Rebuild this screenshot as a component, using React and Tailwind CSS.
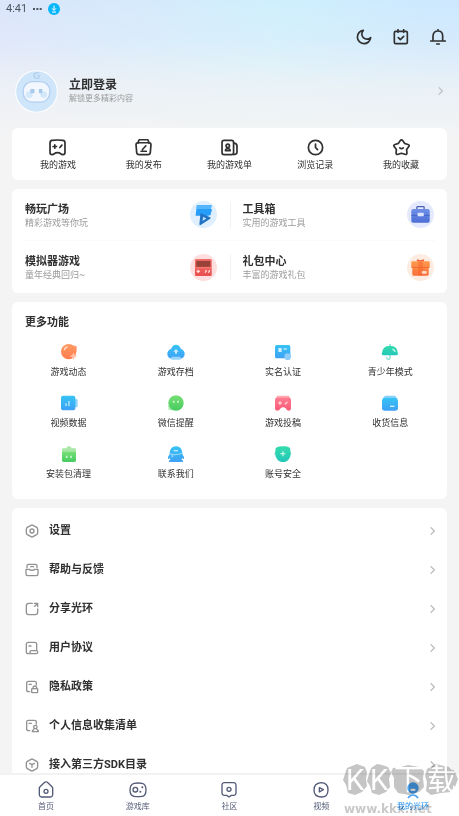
import React from 'react';

const Line = ({ children, className, size = 48, width = 4 }) => (
  <svg
    viewBox={`0 0 ${size} ${size}`}
    className={className}
    fill="none"
    stroke="currentColor"
    strokeWidth={width}
    strokeLinecap="round"
    strokeLinejoin="round"
    aria-hidden="true"
  >
    {children}
  </svg>
);

const Chevron = ({ className }) => (
  <svg viewBox="0 0 15 24" className={`w-[5px] h-2 shrink-0 ${className}`} fill="none" stroke="currentColor" strokeWidth="4" aria-hidden="true">
    <path d="M2 1l11 11L2 23" />
  </svg>
);

// Shared fills for the coloured icons
const Gradients = () => (
  <svg className="absolute size-0" aria-hidden="true">
    <defs>
      {[
        ['blue', '#35c4f4', '#3fa0f5'],
        ['orange', '#ff9a63', '#ff7c4c'],
        ['green', '#78df76', '#46cb60'],
        ['teal', '#35dcac', '#22c7b8'],
        ['pink', '#ff7c90', '#fb5a78'],
        ['indigo', '#6f8fe8', '#4c6ed6'],
        ['gift', '#ff9a4d', '#fb6f3a'],
        ['red', '#f3706a', '#e9504f'],
      ].map(([id, from, to]) => (
        <linearGradient key={id} id={id} x1="0" y1="0" x2="0" y2="1">
          <stop offset="0" stopColor={from} />
          <stop offset="1" stopColor={to} />
        </linearGradient>
      ))}
    </defs>
  </svg>
);

const shortcuts = [
  {
    label: '我的游戏',
    icon: (
      <>
        <path d="M9 4Q25 2 41 4Q47 5 47 11V40Q47 46 41 46Q37 46 34 43Q31 40 25 40T16 43Q13 46 9 46Q3 46 3 40V11Q3 5 9 4Z" />
        <path d="M17 17v10M12 22h10M32 25l6-7" />
      </>
    ),
  },
  {
    label: '我的发布',
    icon: (
      <>
        <path d="M9 12L11 4Q12 2 15 2H35Q38 2 39 4L41 12" />
        <path d="M8 11H42Q47 11 47 17L45 40Q44 46 38 46H12Q6 46 5 40L3 17Q3 11 8 11Z" />
        <path d="M22 31L32 20M18 36H33" />
      </>
    ),
  },
  {
    label: '我的游戏单',
    icon: (
      <>
        <rect x="3" y="4" width="34" height="42" rx="6" />
        <path d="M39 12Q47 14 47 20V39Q47 45 38 46" />
        <circle cx="20" cy="20" r="5" />
        <path d="M13 34Q14 28 20 28T27 34Z" />
      </>
    ),
  },
  {
    label: '浏览记录',
    icon: (
      <>
        <circle cx="25" cy="25" r="21" />
        <path d="M25 15V25L31 31" />
      </>
    ),
  },
  {
    label: '我的收藏',
    icon: (
      <>
        <path d="M21 5Q25 0 29 5L34 13L44 16Q50 18 46 23L40 31L41 41Q41 47 35 45L25 42L15 45Q9 47 9 41L10 31L4 23Q0 18 6 16L16 13Z" />
        <path d="M20 26Q25 31 30 26" />
      </>
    ),
  },
];

const entries = [
  {
    title: '畅玩广场',
    desc: '精彩游戏等你玩',
    tint: 'bg-[#e0effe]',
    icon: (
      <>
        <path d="M21 13H66L63 24L67 26L62 43L38 48L30 45H17Z" fill="#269df8" />
        <path d="M21 13H66L63 24H19Z" fill="#55b6ff" />
        <path d="M34 40L60 52L31 71Z" fill="#2373c4" stroke="#2373c4" strokeWidth="5" strokeLinejoin="round" />
        <path d="M40 48L50 53L38 61Z" fill="#b9dfff" />
      </>
    ),
  },
  {
    title: '工具箱',
    desc: '实用的游戏工具',
    tint: 'bg-[#e4e9fd]',
    icon: (
      <>
        <path d="M30 25V19Q30 17 33 17H49Q52 17 52 19V25" fill="none" stroke="#4a63ae" strokeWidth="4" />
        <path d="M19 24H63Q69 24 69 30V60Q69 66 63 66H19Q13 66 13 60V30Q13 24 19 24Z" fill="url(#indigo)" />
        <path d="M13 44H69" stroke="#3f5cc0" strokeWidth="2" />
        <rect x="32" y="36" width="19" height="10" rx="2" fill="#d9e3fc" />
      </>
    ),
  },
  {
    title: '模拟器游戏',
    desc: '童年经典回归~',
    tint: 'bg-[#fddfdf]',
    icon: (
      <>
        <rect x="15" y="15" width="51" height="52" rx="4" fill="url(#red)" />
        <rect x="19" y="21" width="43" height="18" fill="#984239" />
        <path d="M15 42H66" stroke="#ff958c" strokeWidth="2" />
        <path d="M25 48V58M20 53H30M46 57L50 49M56 57L60 49" stroke="#ffe0dc" strokeWidth="4" />
      </>
    ),
  },
  {
    title: '礼包中心',
    desc: '丰富的游戏礼包',
    tint: 'bg-[#fdece2]',
    icon: (
      <>
        <path d="M30 23V16L40 19L52 16V23Z" fill="#f5633a" />
        <path d="M16 22H66Q69 22 69 25V40H66V61Q66 66 61 66H20Q16 66 16 61V40H13V25Q13 22 16 22Z" fill="url(#gift)" />
        <path d="M34 22H48V66H34Z" fill="#f4662f" opacity="0.55" />
        <path d="M13 41H69" stroke="#ee632f" strokeWidth="2" />
        <rect x="45" y="52" width="15" height="8" rx="3" fill="#ffd9c4" />
      </>
    ),
  },
];

const features = [
  {
    label: '游戏动态',
    icon: (
      <>
        <path d="M40 7L50 10V24L44 34Z" fill="#ff9e78" />
        <circle cx="26" cy="26" r="23" fill="url(#orange)" />
        <path d="M13 20Q15 14 21 12" stroke="#ffe2d4" strokeWidth="4" fill="none" strokeLinecap="round" />
        <path d="M41 28L44 36L52 39L44 43L41 51L37 43L29 39L37 36Z" fill="#ffc2a8" />
      </>
    ),
  },
  {
    label: '游戏存档',
    icon: (
      <>
        <path d="M12 18Q17 5 27 5T42 18Q53 22 53 33Q52 46 40 47H14Q2 46 1 33Q1 22 12 18Z" fill="url(#blue)" />
        <path d="M27 18L35 26H30V32H24V26H19Z" fill="#c9ecff" />
        <rect x="13" y="41" width="28" height="9" rx="3" fill="#9ad6fb" />
      </>
    ),
  },
  {
    label: '实名认证',
    icon: (
      <>
        <rect x="3" y="6" width="46" height="40" rx="5" fill="url(#blue)" />
        <rect x="13" y="15" width="10" height="12" rx="2" fill="#d3f0ff" />
        <path d="M28 18H39" stroke="#bde7ff" strokeWidth="4" />
        <circle cx="41" cy="41" r="10" fill="#8fcdf9" />
      </>
    ),
  },
  {
    label: '青少年模式',
    icon: (
      <>
        <path d="M27 3V9M27 36V45Q26 50 21 49Q17 48 17 43" stroke="#86dfd2" strokeWidth="4" fill="none" />
        <path d="M2 33Q4 8 27 8T51 33Q50 37 45 37H8Q3 37 2 33Z" fill="url(#teal)" />
        <path d="M36 19L42 25" stroke="#d0f7ee" strokeWidth="4" strokeLinecap="round" />
      </>
    ),
  },
  {
    label: '视频数据',
    icon: (
      <>
        <path d="M44 15H49Q53 15 53 19V36Q53 40 49 40H44Z" fill="#8fd3fa" />
        <rect x="3" y="5" width="43" height="44" rx="6" fill="url(#blue)" />
        <path d="M18 28V36M27 21V36" stroke="#bfe9ff" strokeWidth="4" />
      </>
    ),
  },
  {
    label: '微信提醒',
    icon: (
      <>
        <path d="M3 33L5 49H18Z" fill="#b5ecb2" />
        <circle cx="27" cy="27" r="23" fill="url(#green)" />
        <path d="M20 20V26M33 20V26" stroke="#d3f6cf" strokeWidth="5" />
      </>
    ),
  },
  {
    label: '游戏投稿',
    icon: (
      <>
        <path d="M10 5H44L50 14H4Z" fill="#ffa6ae" />
        <path d="M8 11H46Q51 12 51 18V44Q50 50 44 50Q38 50 35 43Q27 37 20 43Q17 50 10 50Q4 50 3 44V18Q3 12 8 11Z" fill="url(#pink)" />
        <path d="M18 22V32M13 27H23M33 31L40 24" stroke="#ffd5da" strokeWidth="4" />
      </>
    ),
  },
  {
    label: '收货信息',
    icon: (
      <>
        <path d="M12 5H42L50 15H4Z" fill="#86cffa" />
        <path d="M7 12H46L51 19V43Q51 50 44 50H10Q3 50 3 43V19Z" fill="url(#blue)" />
        <path d="M27 37H40" stroke="#d3f0ff" strokeWidth="4" />
      </>
    ),
  },
  {
    label: '安装包清理',
    icon: (
      <>
        <path d="M20 10V8Q21 4 27 4T34 8V10H45Q48 10 48 14V24H6V14Q6 10 9 10Z" fill="#a8e7a6" />
        <path d="M6 20H48V46Q48 51 43 51H11Q6 51 6 46Z" fill="url(#green)" />
        <path d="M20 32V39M33 32V39" stroke="#cef4c8" strokeWidth="5" />
      </>
    ),
  },
  {
    label: '联系我们',
    icon: (
      <>
        <path d="M8 28Q8 4 27 4T46 28L51 36V42L45 40L44 46H48V51H6V46H10L9 40L3 42V36Z" fill="url(#blue)" />
        <path d="M7 26Q27 33 47 24" stroke="#91d5fb" strokeWidth="4" fill="none" />
        <path d="M16 30V37" stroke="#91d5fb" strokeWidth="5" />
        <path d="M20 17H33" stroke="#c2eaff" strokeWidth="4" />
      </>
    ),
  },
  {
    label: '账号安全',
    icon: (
      <>
        <path d="M7 19L0 26L7 34ZM46 19L53 26L46 34Z" fill="#8ce6d3" />
        <path d="M5 9Q12 4 20 4H34Q42 4 48 9Q51 25 49 34Q44 49 32 51H22Q10 49 5 34Q2 22 5 9Z" fill="url(#teal)" />
        <path d="M27 19V34M19 26H34" stroke="#c0f5e8" strokeWidth="4" />
      </>
    ),
  },
];

const doc = <path d="M14 35H11Q5 35 5 29V9Q5 4 10 4H29Q34 4 34 9V15M12 13H19" />;

const settings = [
  {
    label: '设置',
    icon: (
      <>
        <path d="M18 4Q21 2 24 4L35 10Q38 12 38 15V27Q38 30 35 32L24 38Q21 40 18 38L7 32Q4 30 4 27V15Q4 12 7 10Z" />
        <circle cx="21" cy="21" r="6" />
      </>
    ),
  },
  {
    label: '帮助与反馈',
    icon: (
      <>
        <path d="M6 14V8Q6 4 10 4H32Q36 4 36 8V14M17 11H26" />
        <path d="M3 19H12Q15 22 21 22T30 19H39V33Q39 38 34 38H8Q3 38 3 33Z" />
      </>
    ),
  },
  {
    label: '分享光环',
    icon: <path d="M22 4H11Q4 4 4 11V31Q4 38 11 38H31Q38 38 38 31V21M28 4H38V14M37 5L29 13" />,
  },
  {
    label: '用户协议',
    icon: (
      <>
        <path d="M15 38H10Q4 38 4 32V10Q4 4 10 4H29Q35 4 35 10V26M12 15H18" />
        <rect x="15" y="29" width="23" height="9" rx="4" />
      </>
    ),
  },
  {
    label: '隐私政策',
    icon: (
      <>
        {doc}
        <path d="M24 26V22Q25 18 29 18T35 22V26" />
        <rect x="20" y="26" width="18" height="12" rx="2" />
      </>
    ),
  },
  {
    label: '个人信息收集清单',
    icon: (
      <>
        {doc}
        <circle cx="31" cy="24" r="5" />
        <path d="M28 29L22 36V38H40V36L34 29" />
      </>
    ),
  },
  {
    label: '接入第三方SDK目录',
    icon: (
      <>
        <path d="M18 4Q21 2 24 4L35 10Q38 12 38 15V27Q38 30 35 32L24 38Q21 40 18 38L7 32Q4 30 4 27V15Q4 12 7 10Z" />
        <path d="M14 16L21 20L28 16M21 20V28" />
      </>
    ),
  },
];

const tabs = [
  {
    label: '首页',
    icon: (
      <>
        <path d="M23 4Q27 1 31 4L45 17Q48 20 47 25V42Q46 48 40 48H14Q8 48 7 42V25Q6 20 9 17Z" />
        <circle cx="27" cy="31" r="6" />
      </>
    ),
  },
  {
    label: '游戏库',
    icon: (
      <>
        <path d="M15 7Q27 5 39 7Q51 9 51 27T39 46Q27 48 15 46Q3 44 3 27T15 7Z" />
        <circle cx="19" cy="26" r="7" />
        <path d="M40 19V19.1M34 32V32.1" strokeWidth="6" />
      </>
    ),
  },
  {
    label: '社区',
    icon: (
      <>
        <path d="M12 5H42Q48 6 48 12V37Q48 42 42 43H34L27 48L20 43H12Q6 42 6 37V12Q6 6 12 5Z" />
        <circle cx="27" cy="25" r="6" />
      </>
    ),
  },
  {
    label: '视频',
    icon: (
      <>
        <path d="M27 5Q48 5 48 27T27 48T6 27T27 5Z" />
        <path d="M22 20L34 26L22 33Z" />
      </>
    ),
  },
];

const Profile = () => (
  <section className="flex items-center h-[70px] pl-[15px] pr-4">
    <svg viewBox="0 0 126 126" className="size-[43px] shrink-0" aria-hidden="true">
      <circle cx="63" cy="63" r="61" fill="#cfe5f9" stroke="#fff" strokeWidth="3" />
      <text x="63" y="26" textAnchor="middle" fontSize="27" fontWeight="bold" fill="#b4d1f0" fontFamily="DejaVu Sans">G</text>
      <rect x="24" y="34" width="78" height="60" rx="27" fill="#f2f7fd" stroke="#b4cff2" strokeWidth="4" />
      <circle cx="42" cy="72" r="10" fill="#d3e9fa" />
      <circle cx="84" cy="72" r="10" fill="#d3e9fa" />
      <path d="M45 56H57V68H45ZM70 56H80V68H70Z" fill="#a6c9ec" />
    </svg>
    <a href="#login" className="flex flex-1 items-center justify-between ml-[11px]">
      <span className="flex flex-col">
        <span className="text-[12px] leading-4 font-bold text-[#303030]">立即登录</span>
        <span className="text-[8px] leading-3 text-[#9b9b9b]">解锁更多精彩内容</span>
      </span>
      <Chevron className="text-[#bfc3c7]" />
    </a>
  </section>
);

const Watermark = () => (
  <svg viewBox="0 -8 116 60" className="absolute right-0 bottom-0 w-[116px] h-[60px] mix-blend-multiply pointer-events-none">
    <g fill="#c5c5c5">
      <path d="M4 4L9 2L14 0L22 3L24 8L23 15L24 22L19 28L12 31L5 29L3 21L0 16L2 10Z" />
      <path d="M28 4L34 0L39 1L45 3L48 9L46 15L47 23L43 28L36 31L29 29L27 22L24 17L26 10Z" />
      <path d="M50 4L58 3L65 1L76 3L81 7L80 14L81 23L76 28L66 31L55 29L51 23L51 14L48 8Z" />
      <path d="M84 5L89 2L93 0L101 2L108 3L112 8L115 15L112 23L108 28L98 29L88 31L83 27L84 18L82 12Z" />
    </g>
    <g fill="#fff" fontSize="29">
      <text x="3" y="26">K</text>
      <text x="27" y="26">K</text>
      <text x="51" y="26">下</text>
      <text x="84" y="26">载</text>
    </g>
    <text x="1" y="49" fontSize="12" fontWeight="bold" fill="#c9c9c9" fontFamily="DejaVu Sans">www.kkx.net</text>
  </svg>
);

const TabBar = () => (
  <nav className="relative flex shrink-0 h-[43px] bg-white border-t-2 border-[#f2f2f2]">
    {tabs.map((tab) => (
      <a key={tab.label} href="#tab" className="flex flex-1 flex-col items-center pt-[6px] text-[#535a78]">
        <Line className="size-[18px]" size={54} width={4}>{tab.icon}</Line>
        <span className="text-[8px] leading-4">{tab.label}</span>
      </a>
    ))}
    <a href="#me" aria-current="page" className="flex flex-1 flex-col items-center pt-[6px] text-[#1688ee]">
      <svg viewBox="0 0 54 54" className="size-[18px]" aria-hidden="true">
        <circle cx="27" cy="21" r="17" fill="#4aa4f5" />
        <rect x="20" y="23" width="14" height="7" rx="2" fill="#fff" />
        <path d="M12 51Q18 42 27 42T42 51" fill="none" stroke="#4aa4f5" strokeWidth="5" />
      </svg>
      <span className="text-[8px] leading-4">我的光环</span>
    </a>
    <Watermark />
  </nav>
);

export default function App() {
  return (
    <div className="relative isolate flex flex-col h-screen overflow-hidden bg-[#f4f4f4] font-[Roboto,'Noto_Sans_CJK_SC',sans-serif] text-[#303030]">
      <Gradients />
      <main className="flex-1 min-h-0 overflow-y-auto [scrollbar-width:none] bg-[linear-gradient(to_bottom,rgba(244,244,244,0)_0px,rgba(244,244,244,0.2)_40px,rgba(244,244,244,0.7)_85px,#f4f4f4_140px),linear-gradient(100deg,#dbe5fb_0%,#cfeffd_48%,#cde9fe_70%,#cbe5ff_100%)]">
        {/* Status bar */}
        <div className="flex items-center h-[18px] pl-[6px] text-[11px] leading-[18px] text-[#4d5560]">
          <span>4:41</span>
          <svg viewBox="0 0 27 6" className="w-[9px] h-[2px] ml-[6px]" fill="currentColor" aria-hidden="true">
            <path d="M0 0h6v6H0zM10 0h6v6h-6zM20 0h6v6h-6z" />
          </svg>
          <svg viewBox="0 0 36 36" className="size-3 ml-[6px]" aria-hidden="true">
            <circle cx="18" cy="18" r="18" fill="#06b6fb" />
            <path d="M18 8V21M12 16L18 22L24 16M12 27H24" fill="none" stroke="#fff" strokeWidth="3" />
          </svg>
        </div>

        {/* Top actions */}
        <header className="flex items-center justify-end gap-[21px] h-[38px] pr-[13px]">
          <button type="button" aria-label="夜间模式">
            <Line className="size-4" width={5}>
              <path d="M22 4A20 20 0 1 0 44 26A14 14 0 0 1 22 4Z" />
            </Line>
          </button>
          <button type="button" aria-label="签到">
            <Line className="size-4" width={5}>
              <rect x="4" y="7" width="39" height="37" rx="4" />
              <path d="M15 2V10M32 2V10M16 26L22 32L32 22" />
            </Line>
          </button>
          <button type="button" aria-label="消息">
            <Line className="size-4" width={5}>
              <path d="M24 2V5M9 35V21Q10 6 24 6T38 21V35M2 36H46M20 45H28" />
            </Line>
          </button>
        </header>

        <Profile />

        <div className="flex flex-col gap-[9px] px-3 pt-[2px]">
          {/* Shortcuts */}
          <section className="flex h-[52px] px-[3px] rounded-md bg-white">
            {shortcuts.map((item) => (
              <button key={item.label} type="button" className="flex flex-1 flex-col items-center pt-[11px]">
                <Line className="size-[17px]" size={50} width={5}>{item.icon}</Line>
                <span className="text-[9px] leading-[18px]">{item.label}</span>
              </button>
            ))}
          </section>

          {/* Entries */}
          <section className="grid grid-cols-2 px-3 rounded-md bg-white">
            {entries.map((item, i) => (
              <button
                key={item.title}
                type="button"
                className={`flex items-center h-[52px] text-left ${i < 2 ? 'border-b border-[#fafafa]' : ''}`}
              >
                <span className={`flex flex-1 items-center justify-between h-[26px] ${i % 2 ? 'pl-3 pr-px border-l border-[#f3f3f3]' : 'pl-px pr-[13px]'}`}>
                  <span className="flex flex-col">
                    <span className="text-[11px] leading-4 font-bold">{item.title}</span>
                    <span className="text-[9px] leading-[10px] text-[#9b9b9b]">{item.desc}</span>
                  </span>
                  <span className={`size-[27px] rounded-full ${item.tint}`}>
                    <svg viewBox="0 0 82 82" className="size-full" aria-hidden="true">{item.icon}</svg>
                  </span>
                </span>
              </button>
            ))}
          </section>

          {/* More features */}
          <section className="h-[197px] px-[3px] pt-3 rounded-md bg-white">
            <h2 className="pl-[10px] text-[11px] leading-[18px] font-bold">更多功能</h2>
            <div className="grid grid-cols-4 pt-[11px]">
              {features.map((item) => (
                <button key={item.label} type="button" className="flex flex-col items-center gap-[3px] h-[51px]">
                  <svg viewBox="0 0 54 54" className="size-[18px]" aria-hidden="true">{item.icon}</svg>
                  <span className="text-[9px] leading-4">{item.label}</span>
                </button>
              ))}
            </div>
          </section>

          {/* Settings list */}
          <section className="pt-[3px] rounded-md bg-white">
            {settings.map((item) => (
              <a key={item.label} href="#settings" className="flex items-center h-[39px] pl-[13px] pr-3">
                <Line className="size-[14px] text-[#929292]" size={42} width={4}>{item.icon}</Line>
                <span className="flex-1 ml-[10px] text-[11px] leading-4 font-bold">{item.label}</span>
                <Chevron className="text-[#bcbcbc]" />
              </a>
            ))}
          </section>
        </div>
      </main>
      <TabBar />
    </div>
  );
}
